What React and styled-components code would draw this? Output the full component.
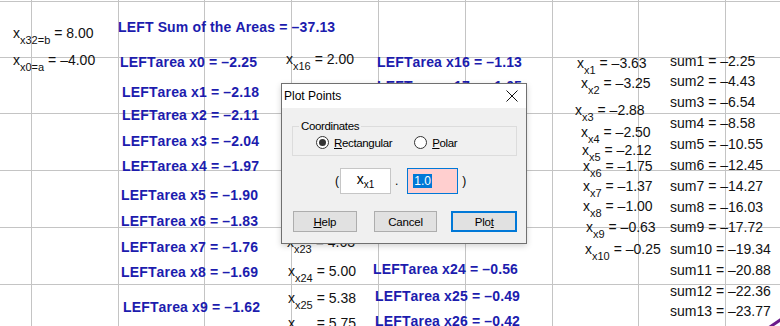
import React from "react";
import styled, { createGlobalStyle } from "styled-components";

const GlobalStyle = createGlobalStyle`
  html, body { margin: 0; padding: 0; background: #fff; }
  body { overflow: hidden; }
`;

const D = "\u2013";

const Canvas = styled.div`
  position: relative;
  width: 780px;
  height: 326px;
  overflow: hidden;
  background: #fff;
  font-family: "Liberation Sans", Arial, sans-serif;
  font-kerning: none;
`;

const GridLayer = styled.svg`
  position: absolute;
  left: 0;
  top: 0;
`;

const Label = styled.div`
  position: absolute;
  left: ${(p) => p.$x}px;
  top: ${(p) => p.$y - 8}px;
  white-space: nowrap;
  font-size: 14px;
  line-height: 16px;
  font-weight: ${(p) => (p.$bold ? 700 : 400)};
  letter-spacing: ${(p) => (p.$bold ? "0.15px" : "0")};
  color: ${(p) => (p.$bold ? "#1c1cae" : "#111")};
`;

const Sub = styled.span`
  position: relative;
  top: ${(p) => p.$drop || 6}px;
  font-size: ${(p) => p.$size || 11}px;
`;

const Dialog = styled.div`
  position: absolute;
  left: 281px;
  top: 83px;
  width: 246px;
  height: 161px;
  box-sizing: border-box;
  border: 1px solid #707070;
  background: #f0f0f0;
  display: flex;
  flex-direction: column;
  box-shadow: 0 2px 6px rgba(0, 0, 0, 0.18);
  font-family: "Liberation Sans", Arial, sans-serif;
  color: #000;
`;

const TitleBar = styled.div`
  height: 24px;
  flex: none;
  background: #fff;
  display: flex;
  align-items: center;
  justify-content: space-between;
  padding-left: 2px;
`;

const TitleText = styled.span`
  font-size: 12px;
`;

const CloseButton = styled.div`
  width: 28px;
  height: 24px;
  display: flex;
  align-items: center;
  justify-content: center;
`;

const Body = styled.div`
  flex: 1;
  display: flex;
  flex-direction: column;
  padding: 18px 9px 0 10px;
`;

const GroupBox = styled.div`
  position: relative;
  height: 30px;
  box-sizing: border-box;
  border: 1px solid #dcdcdc;
  display: flex;
  align-items: center;
  gap: 22px;
  padding: 3px 0 0 23px;
`;

const Caption = styled.span`
  position: absolute;
  top: -8px;
  left: 6px;
  padding: 0 2px;
  background: #f0f0f0;
  font-size: 11.5px;
  line-height: 14px;
  letter-spacing: -0.35px;
`;

const RadioLabel = styled.label`
  display: flex;
  align-items: center;
  gap: 5px;
  font-size: 11.5px;
  letter-spacing: -0.35px;
`;

const RadioCircle = styled.span`
  width: 13px;
  height: 13px;
  box-sizing: border-box;
  border: 1px solid #333;
  border-radius: 50%;
  background: #fff;
  display: flex;
  align-items: center;
  justify-content: center;
  &::after {
    content: "";
    width: 7px;
    height: 7px;
    border-radius: 50%;
    background: ${(p) => (p.$checked ? "#333" : "transparent")};
  }
`;

const U = styled.span`
  text-decoration: underline;
  text-underline-offset: 1px;
`;

const InputRow = styled.div`
  margin-top: 12px;
  height: 26px;
  display: flex;
  align-items: center;
  padding-left: 43px;
`;

const Punct = styled.span`
  font-size: 12px;
  margin: ${(p) => p.$m || "0"};
`;

const CoordBox = styled.div`
  width: 51px;
  height: 26px;
  box-sizing: border-box;
  border: 1px solid #c6c6c6;
  background: #fff;
  display: flex;
  align-items: center;
  justify-content: center;
  font-size: 14px;
  padding-bottom: 4px;
`;

const ValueBox = styled.div`
  width: 51px;
  height: 26px;
  box-sizing: border-box;
  border: 1px solid #0078d7;
  background: #ffcfcf;
  display: flex;
  align-items: center;
  padding-left: 5px;
`;

const Selected = styled.span`
  background: #0078d7;
  color: #fff;
  font-size: 12px;
  line-height: 14px;
  padding: 0 1px;
`;

const ButtonRow = styled.div`
  margin-top: 17px;
  display: flex;
  padding-left: 1px;
`;

const Button = styled.div`
  width: ${(p) => (p.$default ? 66 : 64)}px;
  height: 21px;
  box-sizing: border-box;
  margin-left: ${(p) => p.$ml || 0}px;
  border: ${(p) => (p.$default ? "2px solid #0078d7" : "1px solid #adadad")};
  background: #e1e1e1;
  display: flex;
  align-items: center;
  justify-content: center;
  font-size: 11.5px;
  letter-spacing: -0.2px;
`;

const vLines = [31, 118, 204, 291, 378, 465, 552, 638, 725];
const hLines = [1, 57, 113, 170, 227, 284];

const blue = [
  [118, 27, `LEFT Sum of the Areas = ${D}37.13`],
  [120, 62, `LEFTarea x0 = ${D}2.25`],
  [122, 92, `LEFTarea x1 = ${D}2.18`],
  [122, 115, `LEFTarea x2 = ${D}2.11`],
  [122, 141, `LEFTarea x3 = ${D}2.04`],
  [122, 166, `LEFTarea x4 = ${D}1.97`],
  [121, 195, `LEFTarea x5 = ${D}1.90`],
  [121, 221, `LEFTarea x6 = ${D}1.83`],
  [121, 247, `LEFTarea x7 = ${D}1.76`],
  [121, 272, `LEFTarea x8 = ${D}1.69`],
  [123, 307, `LEFTarea x9 = ${D}1.62`],
  [377, 62, `LEFTarea x16 = ${D}1.13`],
  [377, 86, `LEFTarea x17 = ${D}1.05`],
  [373, 269, `LEFTarea x24 = ${D}0.56`],
  [375, 296, `LEFTarea x25 = ${D}0.49`],
  [375, 321, `LEFTarea x26 = ${D}0.42`],
];

const xs = [
  [13, 33, "x32=b", "8.00"],
  [13, 60, "x0=a", `${D}4.00`],
  [286, 59, "x16", "2.00"],
  [287, 242, "x23", "4.63"],
  [288, 271, "x24", "5.00"],
  [288, 298, "x25", "5.38"],
  [288, 323, "x26", "5.75"],
  [577, 63, "x1", `${D}3.63`],
  [581, 83, "x2", `${D}3.25`],
  [575, 110, "x3", `${D}2.88`],
  [581, 132, "x4", `${D}2.50`],
  [582, 150, "x5", `${D}2.12`],
  [583, 166, "x6", `${D}1.75`],
  [583, 186, "x7", `${D}1.37`],
  [583, 206, "x8", `${D}1.00`],
  [586, 227, "x9", `${D}0.63`],
  [585, 249, "x10", `${D}0.25`],
];

const sums = [
  ["2.25", 61], ["4.43", 81], ["6.54", 102], ["8.58", 123], ["10.55", 144],
  ["12.45", 165], ["14.27", 186], ["16.03", 207], ["17.72", 227], ["19.34", 249],
  ["20.88", 270], ["22.36", 291], ["23.77", 311],
];

export default function App() {
  return (
    <>
      <GlobalStyle />
      <Canvas>
        <GridLayer width="780" height="326" viewBox="0 0 780 326">
          {vLines.map((x) => (
            <rect key={"v" + x} x={x} y={0} width={1} height={326} fill="#c4c4c4" />
          ))}
          {hLines.map((y) => (
            <rect key={"h" + y} x={0} y={y} width={780} height={1} fill="#c4c4c4" />
          ))}
          <line x1="767" y1="329" x2="783" y2="318" stroke="#6a1b8a" strokeWidth="3" />
        </GridLayer>

        {blue.map(([x, y, t]) => (
          <Label key={t} $x={x} $y={y} $bold>
            {t}
          </Label>
        ))}

        {xs.map(([x, y, s, v]) => (
          <Label key={s} $x={x} $y={y}>
            x<Sub>{s}</Sub> = {v}
          </Label>
        ))}

        {sums.map(([v, y], i) => (
          <Label key={v} $x={670} $y={y}>
            sum{i + 1} = {D}{v}
          </Label>
        ))}

        <Dialog>
          <TitleBar>
            <TitleText>Plot Points</TitleText>
            <CloseButton>
              <svg width="12" height="12" viewBox="0 0 12 12">
                <path d="M0.5 0.5 L11.5 11.5 M11.5 0.5 L0.5 11.5" stroke="#111" strokeWidth="1" />
              </svg>
            </CloseButton>
          </TitleBar>
          <Body>
            <GroupBox>
              <Caption>Coordinates</Caption>
              <RadioLabel>
                <RadioCircle $checked />
                <span>
                  <U>R</U>ectangular
                </span>
              </RadioLabel>
              <RadioLabel>
                <RadioCircle />
                <span>
                  <U>P</U>olar
                </span>
              </RadioLabel>
            </GroupBox>
            <InputRow>
              <Punct $m="0 1px 0 0">(</Punct>
              <CoordBox>
                x<Sub $size={10} $drop={5}>x1</Sub>
              </CoordBox>
              <Punct $m="0 9px 0 4px">.</Punct>
              <ValueBox>
                <Selected>1.0</Selected>
              </ValueBox>
              <Punct $m="0 0 0 4px">)</Punct>
            </InputRow>
            <ButtonRow>
              <Button>
                <U>H</U>elp
              </Button>
              <Button $ml={17}>Cancel</Button>
              <Button $ml={14} $default>
                Plo<U>t</U>
              </Button>
            </ButtonRow>
          </Body>
        </Dialog>
      </Canvas>
    </>
  );
}
